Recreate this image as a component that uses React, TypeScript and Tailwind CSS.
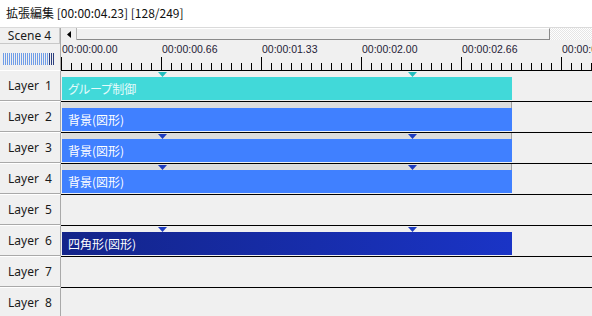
import React from 'react';

type Clip = {
  label: string;
  kind: 'group' | 'blue' | 'navy';
  grouped?: boolean;
  marks?: boolean;
};

const layers: (Clip | null)[] = [
  { label: 'グループ制御', kind: 'group', marks: true },
  { label: '背景(図形)', kind: 'blue', grouped: true },
  { label: '背景(図形)', kind: 'blue', grouped: true, marks: true },
  { label: '背景(図形)', kind: 'blue', grouped: true, marks: true },
  null,
  { label: '四角形(図形)', kind: 'navy', marks: true },
  null,
  null,
];

const timeLabels = ['00:00:00.00', '00:00:00.66', '00:00:01.33', '00:00:02.00', '00:00:02.66', '00:00:03.33'];

const ui = { fontFamily: '"Noto Sans", "Noto Sans CJK JP", sans-serif' };
const jp = { fontFamily: '"Noto Sans CJK JP", sans-serif', fontFeatureSettings: '"palt"' };

// little keyframe marker above a clip
const Marker = ({ color, left }: { color: string; left: string }) => (
  <svg width="9" height="5" viewBox="0 0 9 5" className={`absolute top-[1px] ${left}`}>
    <polygon points="0,0 9,0 4.5,5" fill={color} />
  </svg>
);

const Ruler = () => {
  const ticks = [];
  for (let x = 0.5; x < 531; x += 10) {
    const major = Math.round(x - 0.5) % 100 === 0;
    ticks.push(<line key={x} x1={x} x2={x} y1={major ? 1 : 7} y2={14} stroke="#000" strokeWidth={1} />);
  }
  return (
    <svg width="531" height="14" className="block">
      {ticks}
    </svg>
  );
};

const LayerRow = ({ index, clip }: { index: number; clip: Clip | null }) => {
  const bar =
    clip?.kind === 'group'
      ? 'bg-[#41d9d9] text-[#e4fbfb]'
      : clip?.kind === 'blue'
      ? 'bg-[#4080ff] text-white'
      : 'bg-gradient-to-r from-[#13248a] to-[#1a34c6] text-white';
  const markColor = clip?.kind === 'group' ? '#22bdbd' : '#1e3cc0';

  return (
    <div className="flex h-[31px] shrink-0">
      <div className="w-[61px] shrink-0 flex items-center justify-center border-r border-b border-[#a9a9a9] border-t border-t-white bg-[#f0f0f0] text-[12px] text-[#1a1a1a] whitespace-pre" style={ui}>
        {`Layer  ${index + 1}`}
      </div>
      <div className="flex-1 border-t border-black bg-[#f0f0f0]">
        {clip && (
          <div className="relative ml-[1px] w-[450px]">
            <div className={`h-[6px] ${clip.grouped ? 'bg-[#dcdcdc] border-r border-[#a0a0a0]' : ''}`} />
            {clip.marks && (
              <>
                <Marker color={markColor} left="left-[96px]" />
                <Marker color={markColor} left="left-[346px]" />
              </>
            )}
            <div className={`h-[23px] flex items-center pl-[6px] text-[12px] ${bar}`} style={jp}>
              {clip.label}
            </div>
          </div>
        )}
      </div>
    </div>
  );
};

export default function App() {
  return (
    <div className="w-[592px] h-[316px] overflow-hidden bg-[#f0f0f0] flex flex-col">
      {/* title bar */}
      <div className="h-[28px] shrink-0 bg-white border-b border-[#dadada] flex items-center pl-[6px] pb-[2px] text-[12px] text-[#111]" style={{ fontFamily: '"Noto Sans CJK JP", sans-serif' }}>
        拡張編集 [00:00:04.23] [128/249]
      </div>

      {/* header */}
      <div className="h-[42px] shrink-0 flex">
        <div className="w-[61px] shrink-0 flex flex-col border-r border-[#a9a9a9]">
          <div className="h-[16px] flex items-center justify-center border-b border-r border-[#c8c8c8] text-[12px] text-[#1a1a1a]" style={ui}>
            Scene 4
          </div>
          <div className="flex mt-[9px] ml-[3px] h-[12px] gap-[1px]">
            {Array.from({ length: 26 }).map((_, i) => (
              <span key={i} className={`w-[1px] h-full ${i >= 23 ? 'bg-[#2c3f7e]' : 'bg-[#6f9de8]'}`} />
            ))}
          </div>
        </div>
        <div className="flex-1 flex flex-col">
          <div className="h-[12px] flex">
            <div className="w-[16px] flex items-center justify-center border-r border-[#b4b4b4]">
              <svg width="4" height="7" viewBox="0 0 4 7">
                <polygon points="4,0 4,7 0,3.5" fill="#000" />
              </svg>
            </div>
            <div className="w-[473px] border-b border-r border-[#8a8a8a] border-t border-t-white" />
            <div className="flex-1 bg-[repeating-conic-gradient(#ffffff_0_25%,#e6e6e6_0_50%)] bg-[length:2px_2px]" />
          </div>
          <div className="h-[16px] flex items-end pl-[1px] text-[10.5px] leading-[13px] text-[#1f2036]" style={{ fontFamily: '"Liberation Sans", sans-serif' }}>
            {timeLabels.map((t) => (
              <span key={t} className="w-[100px] shrink-0">{t}</span>
            ))}
          </div>
          <Ruler />
        </div>
      </div>

      {/* layers */}
      {layers.map((clip, i) => (
        <LayerRow key={i} index={i} clip={clip} />
      ))}
    </div>
  );
}
